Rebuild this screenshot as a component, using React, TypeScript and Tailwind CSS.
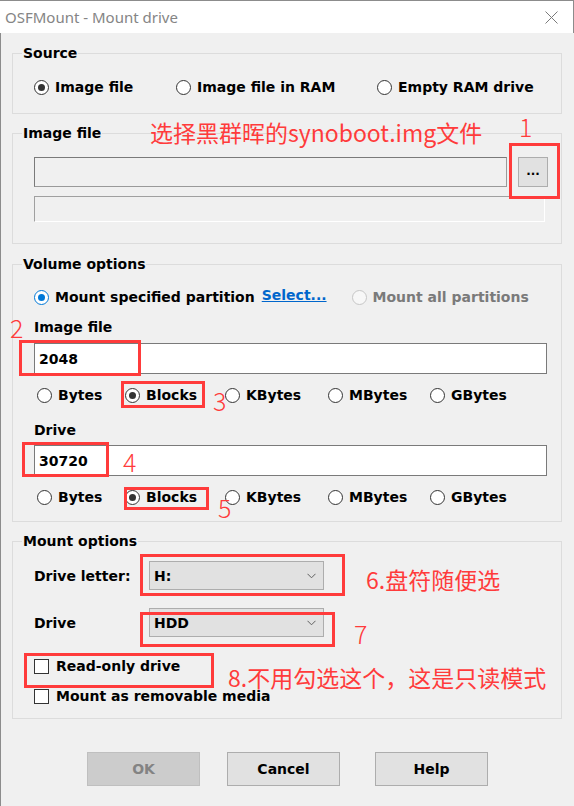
import React from 'react';

type RadioProps = {
  label: string;
  checked?: boolean;
  tone?: 'normal' | 'blue' | 'disabled';
  className?: string;
};

const Radio: React.FC<RadioProps> = ({ label, checked = false, tone = 'normal', className = '' }) => {
  const ring =
    tone === 'blue'
      ? 'border-[#0078d7] bg-white'
      : tone === 'disabled'
      ? 'border-[#c6c6c6] bg-[#f7f7f7]'
      : 'border-[#333333] bg-white';
  const dot = tone === 'blue' ? 'bg-[#0078d7]' : 'bg-[#333333]';
  return (
    <div className={`flex items-center gap-[6px] h-[20px] ${className}`}>
      <span className={`w-[15px] h-[15px] rounded-full border flex items-center justify-center shrink-0 ${ring}`}>
        {checked && <span className={`w-[7px] h-[7px] rounded-full ${dot}`} />}
      </span>
      <span className={tone === 'disabled' ? 'text-[#7a7a7a]' : 'text-black'}>{label}</span>
    </div>
  );
};

const Checkbox: React.FC<{ label: string; className?: string }> = ({ label, className = '' }) => (
  <div className={`flex items-center gap-[7px] h-[20px] ${className}`}>
    <span className="w-[15px] h-[15px] border border-[#333333] bg-white shrink-0" />
    <span>{label}</span>
  </div>
);

const GroupBox: React.FC<{ title: string; className?: string; children: React.ReactNode }> = ({
  title,
  className = '',
  children,
}) => (
  <div className={`relative border border-[#dcdcdc] ${className}`}>
    <span className="absolute -top-[10px] left-[9px] px-[1px] bg-[#f0f0f0] leading-[18px]">{title}</span>
    {children}
  </div>
);

const Combo: React.FC<{ value: string }> = ({ value }) => (
  <div className="w-[175px] h-[29px] bg-[#e1e1e1] border border-[#adadad] flex items-center justify-between pl-[4px] pr-[7px]">
    <span>{value}</span>
    <svg width="9" height="6" viewBox="0 0 9 6">
      <path d="M0.5 0.8 L4.5 4.8 L8.5 0.8" fill="none" stroke="#606060" strokeWidth="1" />
    </svg>
  </div>
);

const UnitRow: React.FC = () => (
  <div className="flex items-center h-[20px] ml-[3px]">
    <Radio label="Bytes" className="w-[88px]" />
    <Radio label="Blocks" checked className="w-[100px]" />
    <Radio label="KBytes" className="w-[103px]" />
    <Radio label="MBytes" className="w-[102px]" />
    <Radio label="GBytes" />
  </div>
);

const App: React.FC = () => {
  return (
    <div className="relative w-[574px] h-[806px] bg-[#f0f0f0] overflow-hidden font-['DejaVu_Sans',sans-serif] font-bold text-[14px] leading-[20px] text-black">
      {/* title bar */}
      <div className="h-[33px] bg-white border-t border-r border-[#8c8c8c] flex items-center justify-between pl-[5px] pr-[15px]">
        <span className="font-['Noto_Sans',sans-serif] font-normal text-[15px] text-[#858585]">OSFMount - Mount drive</span>
        <svg width="13" height="13" viewBox="0 0 13 13">
          <path d="M0.5 0.5 L12.5 12.5 M12.5 0.5 L0.5 12.5" stroke="#7a7a7a" strokeWidth="1" />
        </svg>
      </div>

      <div className="h-[773px] border-l border-[#8c8c8c] pl-[11px] pr-[12px] flex flex-col">
        <GroupBox title="Source" className="mt-[20px] h-[61px] pt-[23px] pl-[21px]">
          <div className="flex items-center h-[20px]">
            <Radio label="Image file" checked className="w-[142px]" />
            <Radio label="Image file in RAM" className="w-[201px]" />
            <Radio label="Empty RAM drive" />
          </div>
        </GroupBox>

        <GroupBox title="Image file" className="mt-[19px] h-[111px] pt-[23px] pl-[21px]">
          <div className="flex items-center">
            <div className="w-[473px] h-[30px] bg-[#f0f0f0] border border-[#9a9a9a] border-t-[#7a7a7a] border-l-[#7a7a7a]" />
            <button className="ml-[11px] w-[30px] h-[30px] bg-[#e1e1e1] border border-[#adadad] flex items-center justify-center text-[12px] leading-none pb-[2px]">
              ...
            </button>
          </div>
          <div className="mt-[9px] w-[511px] h-[26px] bg-[#f0f0f0] border border-t-[#a0a0a0] border-l-[#a0a0a0] border-b-white border-r-white" />
        </GroupBox>

        <GroupBox title="Volume options" className="mt-[20px] h-[258px] pt-[22px] pl-[21px]">
          <div className="flex items-center h-[20px]">
            <Radio label="Mount specified partition" checked tone="blue" />
            <span className="ml-[7px] relative -top-[2px] text-[#0066cc] underline">Select...</span>
            <Radio label="Mount all partitions" tone="disabled" className="ml-[25px]" />
          </div>
          <div className="mt-[11px] h-[18px] leading-[18px]">Image file</div>
          <div className="mt-[7px] w-[513px] h-[31px] bg-white border border-[#7a7a7a] flex items-center pl-[4px]">2048</div>
          <div className="mt-[11px]">
            <UnitRow />
          </div>
          <div className="mt-[16px] h-[18px] leading-[18px]">Drive</div>
          <div className="mt-[6px] w-[513px] h-[31px] bg-white border border-[#7a7a7a] flex items-center pl-[4px]">30720</div>
          <div className="mt-[11px]">
            <UnitRow />
          </div>
        </GroupBox>

        <GroupBox title="Mount options" className="mt-[19px] h-[178px] pt-[19px] pl-[21px]">
          <div className="flex items-center">
            <span className="w-[115px]">Drive letter:</span>
            <Combo value="H:" />
          </div>
          <div className="mt-[18px] flex items-center">
            <span className="w-[115px]">Drive</span>
            <Combo value="HDD" />
          </div>
          <Checkbox label="Read-only drive" className="mt-[19px]" />
          <Checkbox label="Mount as removable media" className="mt-[10px]" />
        </GroupBox>

        <div className="mt-[33px] flex">
          <button className="ml-[75px] w-[113px] h-[34px] bg-[#cccccc] border border-[#bfbfbf] text-[#838383]">OK</button>
          <button className="ml-[27px] w-[113px] h-[34px] bg-[#e1e1e1] border border-[#adadad]">Cancel</button>
          <button className="ml-[35px] w-[113px] h-[34px] bg-[#e1e1e1] border border-[#adadad]">Help</button>
        </div>
      </div>

      {/* red annotations drawn over the dialog */}
      <div className="font-['Noto_Sans_CJK_SC',sans-serif] font-normal text-[#ff3b3b]">
        <span className="absolute left-[150px] top-[117px] text-[23px] leading-[30px]">选择黑群晖的synoboot.img文件</span>
        <span className="absolute left-[519px] top-[111px] text-[25px] leading-[30px] font-light">1</span>
        <div className="absolute left-[509px] top-[143px] w-[51px] h-[56px] border-[3px] border-[#ff3b3b]" />

        <span className="absolute left-[10px] top-[312px] text-[25px] leading-[30px] font-light">2</span>
        <div className="absolute left-[19px] top-[340px] w-[122px] h-[36px] border-[3px] border-[#ff3b3b]" />

        <div className="absolute left-[121px] top-[381px] w-[84px] h-[27px] border-[3px] border-[#ff3b3b]" />
        <span className="absolute left-[213px] top-[385px] text-[25px] leading-[30px] font-light">3</span>

        <div className="absolute left-[22px] top-[442px] w-[87px] h-[35px] border-[3px] border-[#ff3b3b]" />
        <span className="absolute left-[123px] top-[446px] text-[25px] leading-[30px] font-light">4</span>

        <div className="absolute left-[124px] top-[487px] w-[85px] h-[23px] border-[3px] border-[#ff3b3b]" />
        <span className="absolute left-[218px] top-[492px] text-[25px] leading-[30px] font-light">5</span>

        <div className="absolute left-[140px] top-[554px] w-[205px] h-[42px] border-[3px] border-[#ff3b3b]" />
        <span className="absolute left-[366px] top-[564px] text-[23px] leading-[30px]">6.盘符随便选</span>

        <div className="absolute left-[140px] top-[612px] w-[195px] h-[35px] border-[3px] border-[#ff3b3b]" />
        <span className="absolute left-[354px] top-[618px] text-[25px] leading-[30px] font-light">7</span>

        <div className="absolute left-[24px] top-[653px] w-[190px] h-[35px] border-[3px] border-[#ff3b3b]" />
        <span className="absolute left-[228px] top-[662px] text-[23px] leading-[30px]">8.不用勾选这个，这是只读模式</span>
      </div>
    </div>
  );
};

export default App;
